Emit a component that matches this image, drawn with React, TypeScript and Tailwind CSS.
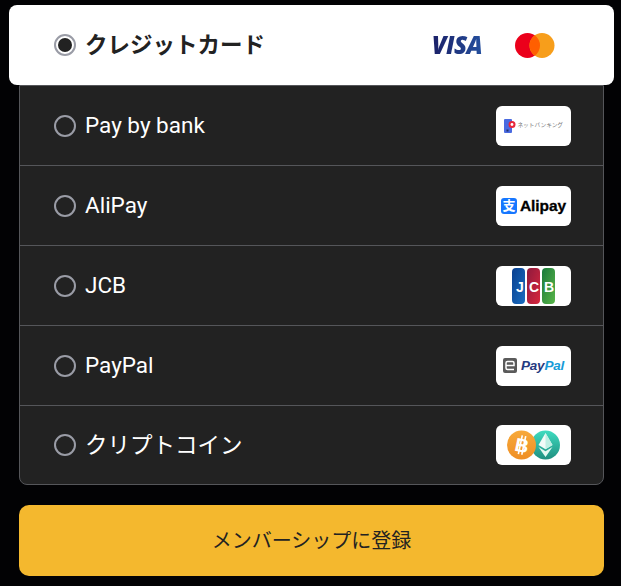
const font = "font-['Roboto','Noto_Sans_CJK_JP',sans-serif]";

function Radio({ checked = false }: { checked?: boolean }) {
  return (
    <span className={"flex h-[22px] w-[22px] shrink-0 items-center justify-center rounded-full border-2 border-[#9a9ca6] " + (checked ? "bg-white" : "")}>
      {checked && <span className="h-[14px] w-[14px] rounded-full bg-[#222222]" />}
    </span>
  );
}

function LogoBox({ children }: { children: React.ReactNode }) {
  return (
    <div className="flex h-10 w-[75px] shrink-0 items-center justify-center overflow-hidden rounded-md bg-white">
      {children}
    </div>
  );
}

function Row({ label, children, last = false, h = "h-20" }: { label: string; children: React.ReactNode; last?: boolean; h?: string }) {
  return (
    <div className={"flex items-center justify-between pl-[34px] pr-[32px] " + h + " " + (last ? "" : "border-b border-[#55565a]")}>
      <div className="flex items-center gap-[9px]">
        <Radio />
        <span className="text-[22.5px] leading-none text-white">{label}</span>
      </div>
      {children}
    </div>
  );
}

function Visa() {
  return (
    <span className="flex w-[52px] justify-center whitespace-nowrap bg-gradient-to-r from-[#1a1f66] to-[#24509f] bg-clip-text text-[24px] font-extrabold italic leading-none tracking-[-0.5px] text-transparent font-['Open_Sans',sans-serif]">
      VISA
    </span>
  );
}

function Mastercard() {
  return (
    <svg width="40" height="25" viewBox="0 0 40 25">
      <circle cx="12.500" cy="12.500" r="12.500" fill="#eb001b" />
      <circle cx="27" cy="12.500" r="12.500" fill="#f79e1b" />
      <path d="M19.750 2.300a12.500 12.500 0 0 1 0 20.400 12.500 12.500 0 0 1 0-20.400z" fill="#ff5f00" />
    </svg>
  );
}

function BankLogo() {
  return (
    <div className="flex items-center gap-[1.5px]">
      <svg width="12" height="14" viewBox="0 0 12 14">
        <rect x="0" y="0" width="8" height="14" rx="1" fill="#4a6ae0" />
        <rect x="2.500" y="10.500" width="2" height="2" fill="#20306a" />
        <circle cx="8" cy="5.500" r="3.500" fill="#e8263a" />
        <circle cx="8" cy="5.500" r="1.400" fill="#fff" />
      </svg>
      <span className="whitespace-nowrap text-[5.7px] leading-none text-[#777777]">ネットバンキング</span>
    </div>
  );
}

function AlipayLogo() {
  return (
    <div className="flex items-center gap-[3px]">
      <span className="flex h-4 w-4 items-center justify-center rounded-[3px] bg-[#1677ff] text-[13px] font-bold leading-none text-white">支</span>
      <span className="text-[15.5px] font-bold leading-none tracking-[-0.1px] text-black [-webkit-text-stroke:0.3px_black] font-['Liberation_Sans',sans-serif]">Alipay</span>
    </div>
  );
}

function JcbLogo() {
  const letter = "absolute top-[12px] w-[13px] text-center text-[14px] font-bold leading-none text-white font-['Liberation_Sans',sans-serif]";
  return (
    <div className="relative flex h-[36px] w-[44px] gap-[1.7px]">
      <div className="h-full w-[13.5px] rounded-[4px] bg-gradient-to-br from-[#0a3f8f] to-[#1a6dc0]" />
      <div className="h-full w-[13.5px] rounded-[4px] bg-gradient-to-br from-[#8f1a3c] to-[#d8263c]" />
      <div className="h-full w-[13.5px] rounded-[4px] bg-gradient-to-br from-[#157a3a] to-[#58b548]" />
      <span className={letter + " left-[2px]"}>J</span>
      <span className={letter + " left-[16px]"}>C</span>
      <span className={letter + " left-[31px]"}>B</span>
    </div>
  );
}

function PaypalLogo() {
  return (
    <div className="flex items-center gap-[4px]">
      <svg width="14" height="15" viewBox="0 0 14 15">
        <rect width="14" height="15" rx="2" fill="#5a5a5a" />
        <path d="M3 7.500H11V5a1.500 1.500 0 0 0-1.500-1.500H4.500A1.500 1.500 0 0 0 3 5V10a1.500 1.500 0 0 0 1.500 1.500H11" fill="none" stroke="#fff" strokeWidth="1.500" />
      </svg>
      <span className="text-[13.5px] font-bold italic leading-none tracking-[-0.2px] font-['Liberation_Sans',sans-serif]">
        <span className="text-[#253b80]">Pay</span>
        <span className="text-[#179bd7]">Pal</span>
      </span>
    </div>
  );
}

function CryptoLogo() {
  return (
    <svg width="53" height="30" viewBox="0 0 53 30">
      <defs>
        <linearGradient id="eth" x1="0" y1="0" x2="0" y2="1">
          <stop offset="0" stopColor="#3fdcc0" />
          <stop offset="1" stopColor="#1f8f80" />
        </linearGradient>
        <linearGradient id="btc" x1="0" y1="0" x2="0" y2="1">
          <stop offset="0" stopColor="#f7a93a" />
          <stop offset="1" stopColor="#ef8f25" />
        </linearGradient>
      </defs>
      <circle cx="38.500" cy="15" r="14.500" fill="url(#eth)" />
      <path d="M38.500 3 31.500 15l7 4.200 7-4.200z" fill="#f2fbf8" />
      <path d="M38.500 3V19.200l7-4.200z" fill="#bff0e4" />
      <path d="M31.500 17 38.500 27 45.500 17 38.500 21.200z" fill="#e4f8f2" />
      <circle cx="14.500" cy="15" r="14.500" fill="url(#btc)" />
      <g transform="rotate(12 14.500 15)" fill="#fff">
        <rect x="12.500" y="5.500" width="1.600" height="19" />
        <rect x="16" y="5.500" width="1.600" height="19" />
        <text x="15" y="22" textAnchor="middle" fontFamily="Liberation Sans, sans-serif" fontWeight="700" fontSize="19">B</text>
      </g>
    </svg>
  );
}

export default function App() {
  return (
    <div className={"flex h-[586px] w-[621px] flex-col overflow-hidden bg-[#020204] pt-[5px] " + font}>
      <div className="ml-[9px] mr-[7px] flex h-20 items-center justify-between rounded-lg bg-white pl-[45px] pr-[59px]">
        <div className="flex items-center gap-[9px]">
          <Radio checked />
          <span className="text-[22.5px] font-bold leading-none text-[#222222]">クレジットカード</span>
        </div>
        <div className="flex items-center gap-[32px]">
          <Visa />
          <Mastercard />
        </div>
      </div>
      <div className="ml-[19px] mr-[17px] rounded-b-lg border border-[#55565a] bg-[#222222]">
        <Row label="Pay by bank"><LogoBox><BankLogo /></LogoBox></Row>
        <Row label="AliPay"><LogoBox><AlipayLogo /></LogoBox></Row>
        <Row label="JCB"><LogoBox><JcbLogo /></LogoBox></Row>
        <Row label="PayPal"><LogoBox><PaypalLogo /></LogoBox></Row>
        <Row label="クリプトコイン" last h="h-[78px]"><LogoBox><CryptoLogo /></LogoBox></Row>
      </div>
      <button className="ml-[19px] mr-[17px] mt-5 flex h-[71px] items-center justify-center rounded-[10px] bg-[#f4b82e] text-[20px] font-normal text-[#222222]">
        メンバーシップに登録
      </button>
    </div>
  );
}
